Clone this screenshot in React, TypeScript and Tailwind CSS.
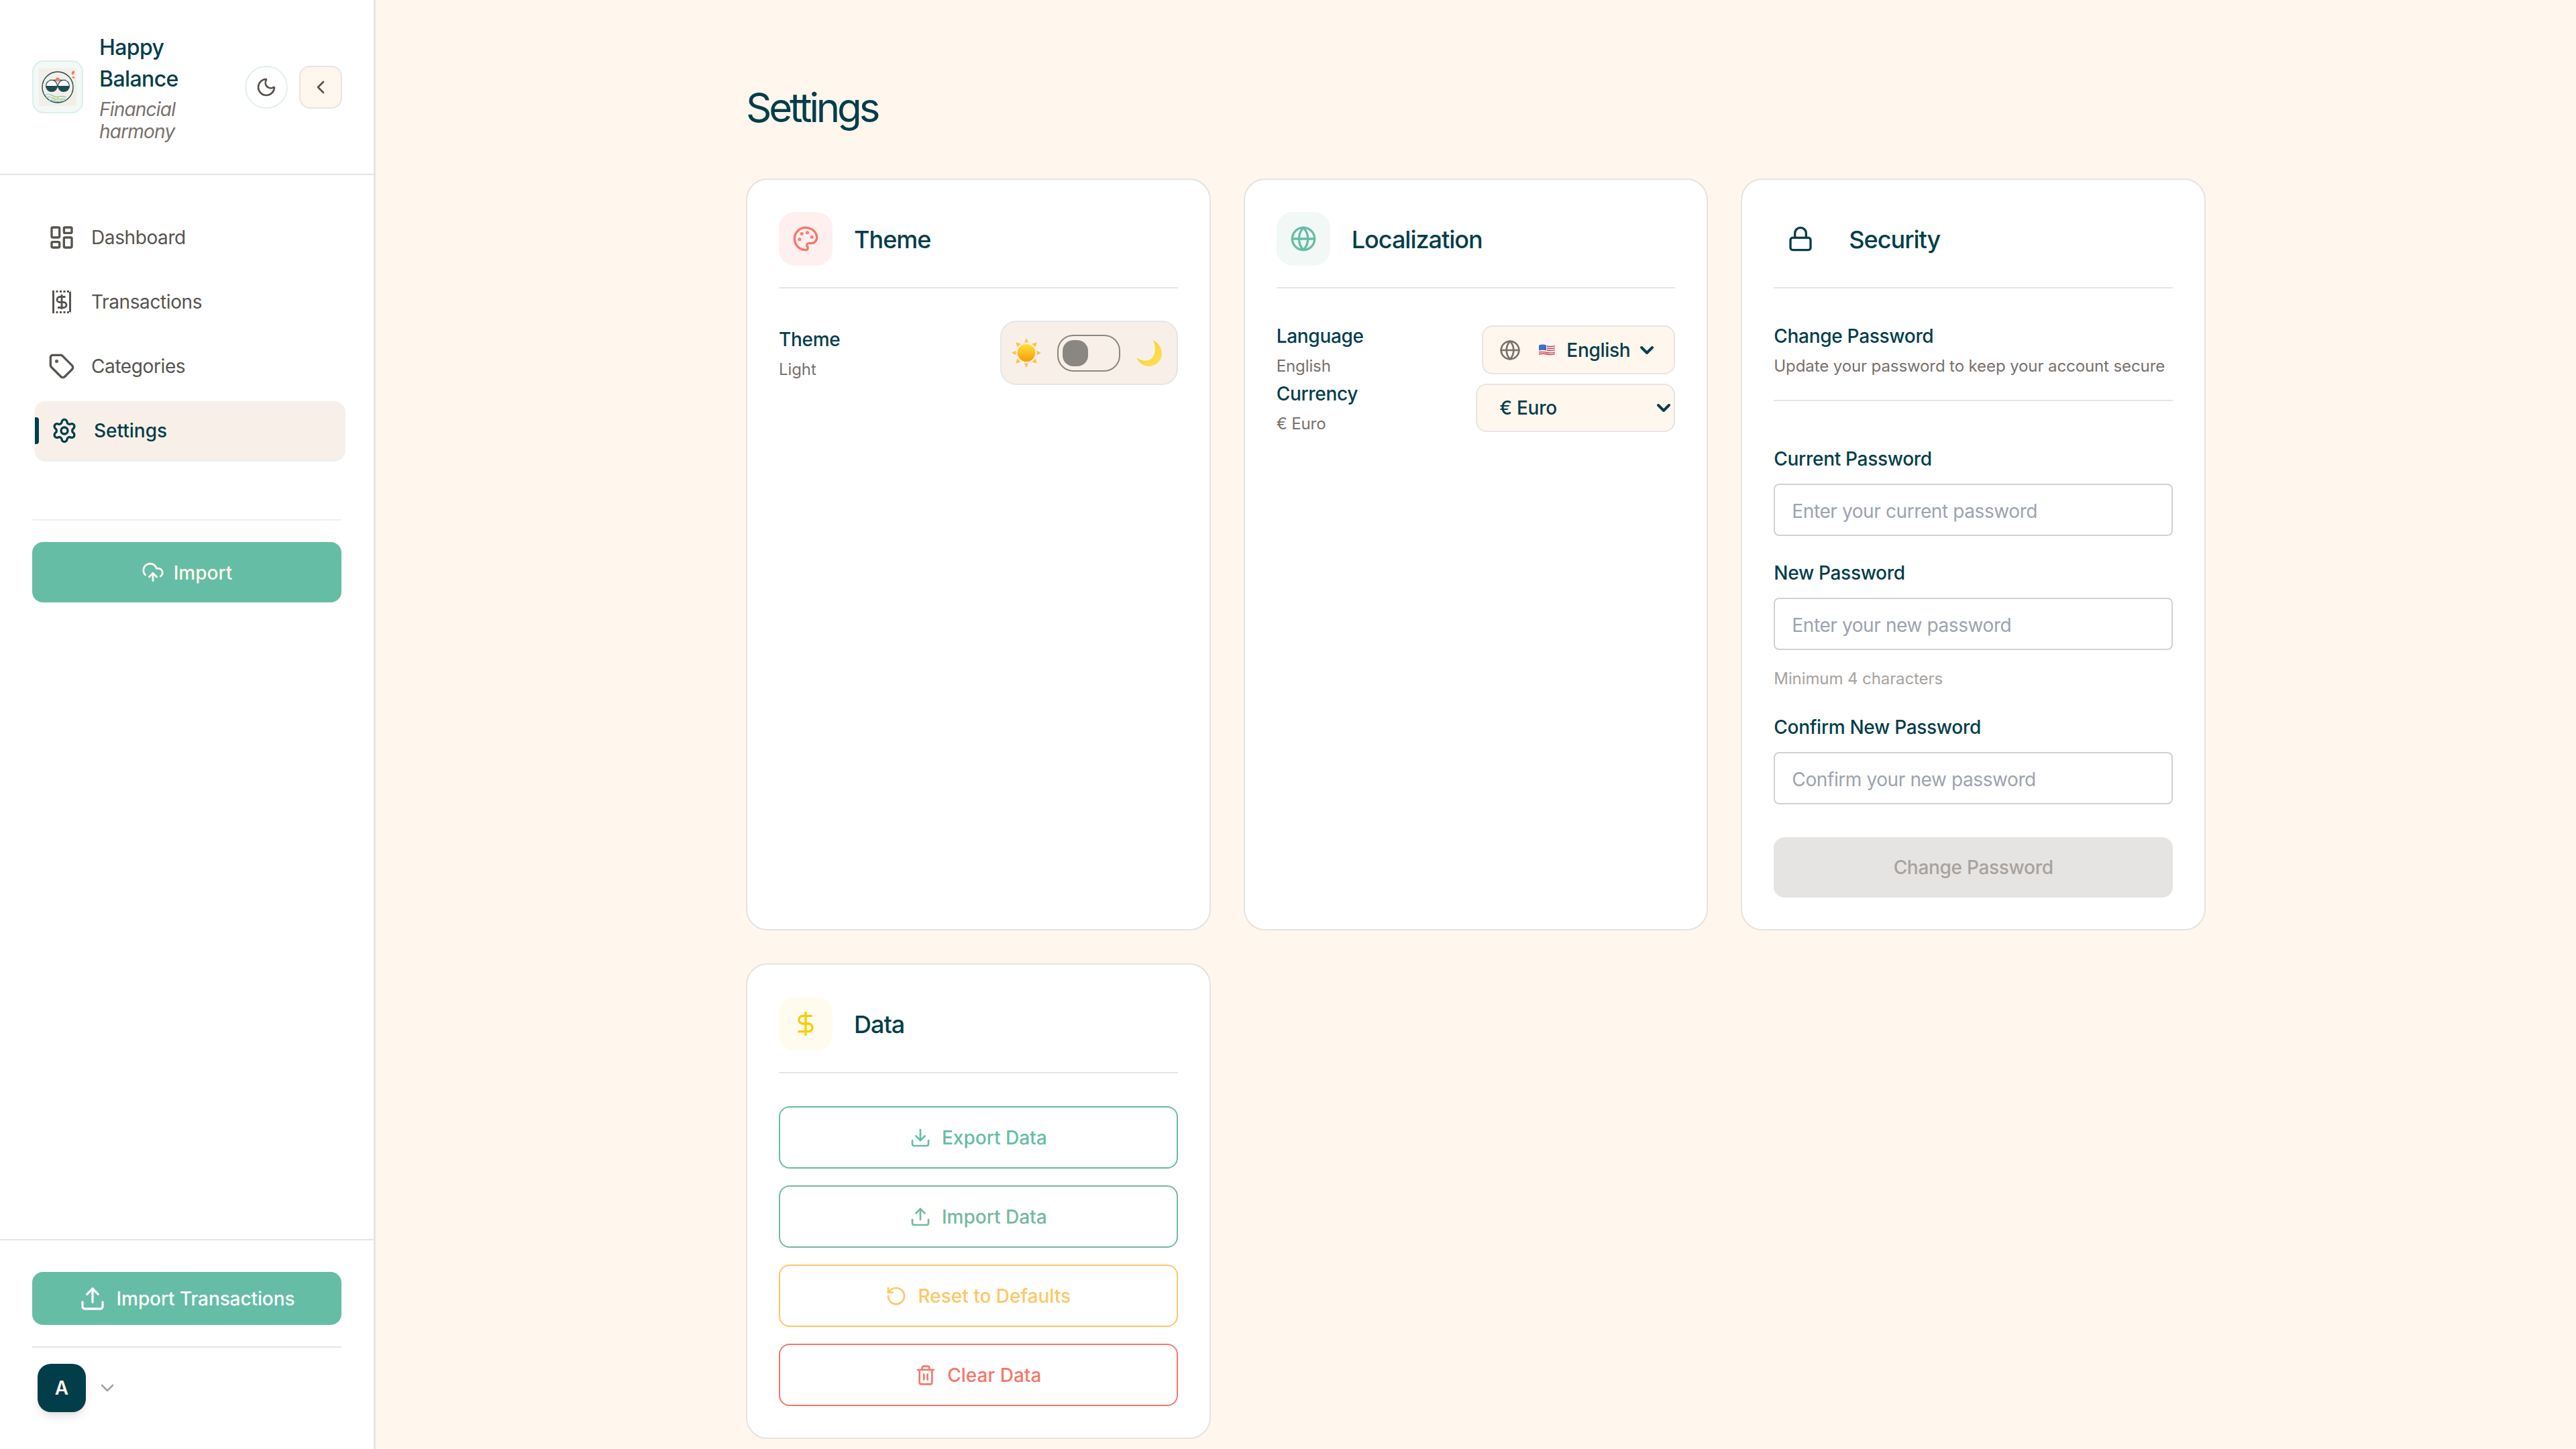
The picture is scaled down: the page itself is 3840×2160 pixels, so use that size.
import React from "react";
import {
  ChevronDown,
  ChevronLeft,
  CloudUpload,
  DollarSign,
  Download,
  Globe,
  LayoutDashboard,
  Lock,
  Moon,
  Palette,
  RotateCcw,
  Settings,
  Tag,
  Trash2,
  Upload,
} from "lucide-react";

const Logo = () => (
  <svg viewBox="48 90 76 79" className="w-[76px] h-[79px] shrink-0">
    <rect x="49" y="91" width="74" height="77" rx="16" fill="#f3f9f6" stroke="#dceee8" strokeWidth="2" />
    <rect x="58" y="102" width="56" height="56" fill="#f2efe9" />
    <circle cx="86" cy="130" r="23" fill="none" stroke="#1f4a52" strokeWidth="1.4" />
    <path d="M74 119.5h24" stroke="#1f4a52" strokeWidth="1.4" />
    <circle cx="86" cy="118.500" r="3" fill="#ef7d6c" />
    <circle cx="77" cy="128" r="8.500" fill="#fff" stroke="#1f4a52" strokeWidth="1.2" />
    <circle cx="95" cy="128" r="8.500" fill="#fff" stroke="#1f4a52" strokeWidth="1.2" />
    <path d="M68.500 128h17a8.500 8.500 0 0 1-17 0zM86.500 128h17a8.500 8.500 0 0 1-17 0z" fill="#1f4a52" />
    <path
      d="M67 142q5-3 10 0t10 2t12 1M68 146q5-3 10 0t10 2t11 1M72 150q5-2 9 0t9 1t6 0"
      fill="none"
      stroke="#7cc4ac"
      strokeWidth="1.2"
    />
    <circle cx="81" cy="144" r="1.200" fill="#f7c23f" />
    <circle cx="86" cy="146" r="1.200" fill="#f7c23f" />
    <circle cx="91" cy="148" r="1.200" fill="#f7c23f" />
    <ellipse cx="109" cy="108.500" rx="2" ry="3" transform="rotate(25 109 108.500)" fill="#ef7d6c" />
    <ellipse cx="109.500" cy="115.500" rx="2" ry="1.400" transform="rotate(25 109.500 115.500)" fill="#ef7d6c" />
  </svg>
);

const ReceiptIcon = () => (
  <svg viewBox="0 0 40 40" className="w-10 h-10 shrink-0" fill="none" stroke="currentColor" strokeWidth="3">
    <path d="M7.500 5v30M32.500 5v30" />
    <path d="M6 4.500h28M6 35.500h28" strokeDasharray="3 2.500" />
    <path d="M20 9v22M25.500 12.500H17a4 4 0 0 0 0 8h6a4 4 0 0 1 0 8h-9" strokeWidth="2.800" />
  </svg>
);

const SunEmoji = () => (
  <svg viewBox="0 0 42 42" className="w-[44px] h-[44px] shrink-0">
    <defs>
      <linearGradient id="sunFill" x1="0" y1="0" x2="0" y2="1">
        <stop offset="0" stopColor="#ffe135" />
        <stop offset="1" stopColor="#f59a0c" />
      </linearGradient>
    </defs>
    <g fill="#fbc04b">
      <path d="M21 0l3 6h-6zM21 42l-3-6h6zM0 21l6-3v6zM42 21l-6 3v-6z" />
      <path d="M6 6l7 2-5 5zM36 6l-2 7-5-5zM6 36l2-7 5 5zM36 36l-7-2 5-5z" />
    </g>
    <circle cx="21" cy="21" r="13" fill="url(#sunFill)" stroke="#fde9b8" strokeWidth="1" />
  </svg>
);

const MoonEmoji = () => (
  <svg viewBox="0 0 38 39" className="w-[38px] h-[39px] shrink-0">
    <defs>
      <linearGradient id="moonFill" x1="0" y1="0" x2="1" y2="1">
        <stop offset="0" stopColor="#f6c92e" />
        <stop offset="1" stopColor="#fde35c" />
      </linearGradient>
    </defs>
    <path
      d="M25 0C33 4 38 12 38 20C38 31 29 39 18 39C10 39 4 34 0 26C6 30 12 32 18 30C27 27 31 14 25 0Z"
      fill="url(#moonFill)"
    />
  </svg>
);

const FlagEmoji = () => (
  <svg viewBox="0 0 24 17" className="w-6 h-[17px] shrink-0">
    <path d="M0 1.500q6-2 12 0t12-1v15q-6 2-12 0t-12 1z" fill="#f4f4f4" />
    <g fill="none" stroke="#d3394a" strokeWidth="1.300">
      <path d="M12 3q6 1.500 12-.500M12 6q6 1.500 12-.500M12 9q6 1.500 12-.500M0 12q6-1 12 .500t12-.500M0 15q6-1.500 12 0t12-.500" />
    </g>
    <path d="M0 1.500q6-2 11 0v8q-5-1.500-11 0z" fill="#3f71c0" />
  </svg>
);

const navItems = [
  { label: "Dashboard", icon: <LayoutDashboard size={40} /> },
  { label: "Transactions", icon: <ReceiptIcon /> },
  { label: "Categories", icon: <Tag size={40} /> },
];

const Sidebar = () => (
  <aside className="w-[560px] h-screen shrink-0 bg-white border-r-[3px] border-[#e7e5e4] flex flex-col">
    <div className="h-[261px] border-b-2 border-[#e7e5e4] flex items-center pl-[48px] pr-[47px]">
      <Logo />
      <div className="ml-[24px] w-[180px]">
        <h1 className="text-[32px] leading-[47px] font-medium tracking-[-0.6px] text-[#023e4a]">Happy Balance</h1>
        <p className="text-[28px] leading-[33px] italic tracking-[-0.8px] text-[#78716c] mt-[6px]">Financial harmony</p>
      </div>
      <div className="ml-auto flex items-center gap-[17px]">
        <button className="w-[64px] h-[64px] rounded-full border-2 border-[#e3f0ec] bg-white flex items-center justify-center text-[#57534e]">
          <Moon size={32} />
        </button>
        <button className="w-[64px] h-[64px] rounded-[16px] border-2 border-[#e7e5e4] bg-[#fff6ee] flex items-center justify-center text-[#57534e]">
          <ChevronLeft size={32} />
        </button>
      </div>
    </div>

    <nav className="pt-[49px] flex flex-col gap-2 px-[48px]">
      {navItems.map((item) => (
        <a
          key={item.label}
          className="h-[88px] flex items-center gap-6 pl-[24px] text-[28px] tracking-[-0.4px] text-[#57534e]"
        >
          {item.icon}
          <span>{item.label}</span>
        </a>
      ))}
      <a className="relative h-[88px] w-[462px] translate-x-1 flex items-center gap-6 pl-[24px] rounded-[16px] bg-[#f8f0e8] shadow-sm text-[28px] font-medium text-[#023e4a]">
        <span className="absolute left-0 top-[24px] h-[40px] w-[6px] rounded-r-[4px] bg-[#023e4a]" />
        <Settings size={40} />
        <span>Settings</span>
      </a>
    </nav>

    <div className="mx-[48px] mt-[88px] pt-[32px] border-t-2 border-[#eef1f0]">
      <button className="w-full h-[90px] rounded-[16px] bg-[#66bda5] text-[#fff6ee] text-[28px] font-medium flex items-center justify-center gap-[14px]">
        <CloudUpload size={34} />
        <span className="mt-[2px]">Import</span>
      </button>
    </div>

    <div className="mt-auto border-t-2 border-[#e7e5e4] pt-[47px] px-[48px] pb-[55px]">
      <button className="w-full h-[79px] rounded-[16px] bg-[#66bda5] text-white text-[28px] tracking-[-0.1px] font-medium flex items-center justify-center gap-[16px]">
        <Upload size={40} />
        Import Transactions
      </button>
      <div className="mt-[32px] pt-[24px] border-t-2 border-[#e7e5e4] flex items-center pl-[8px] gap-[16px]">
        <div className="w-[72px] h-[72px] rounded-[20px] bg-[#023e4a] text-[#fff6ee] text-[28px] font-semibold flex items-center justify-center shadow-lg">
          A
        </div>
        <ChevronDown size={32} className="text-[#a8a29e]" />
      </div>
    </div>
  </aside>
);

type CardProps = {
  title: string;
  icon: React.ReactNode;
  iconBg: string;
  children: React.ReactNode;
};

const Card = ({ title, icon, iconBg, children }: CardProps) => (
  <section className="bg-white border-2 border-[#e5e3e1] rounded-[32px] px-[47px] pt-[48px] pb-[47px]">
    <div className="flex items-center gap-[32px] pb-[32px] border-b-2 border-[#e7e5e4]">
      <div className={`w-[80px] h-[80px] rounded-[24px] flex items-center justify-center ${iconBg}`}>{icon}</div>
      <h2 className="pt-[2px] text-[36px] leading-[56px] font-medium tracking-[-1px] text-[#023e4a]">{title}</h2>
    </div>
    {children}
  </section>
);

const Label = ({ children }: { children: React.ReactNode }) => (
  <div className="text-[28px] leading-[40px] font-medium tracking-[-0.3px] text-[#023e4a]">{children}</div>
);

const Sub = ({ children }: { children: React.ReactNode }) => (
  <div className="text-[24px] leading-[32px] tracking-[-0.1px] text-[#78716c] mt-[9px]">{children}</div>
);

const PasswordInput = ({ placeholder }: { placeholder: string }) => (
  <input
    type="password"
    placeholder={placeholder}
    className="mt-[17px] w-full h-[78px] px-[25px] pt-[3px] rounded-[8px] border-2 border-[#d1d1d1] bg-white text-[28px] tracking-[-0.4px] placeholder:text-[#9ca3af]"
  />
);

const dataActions = [
  {
    label: "Export Data",
    icon: <Download size={32} />,
    tone: "border-[#66bda5] text-[#66bda5]",
  },
  {
    label: "Import Data",
    icon: <Upload size={32} />,
    tone: "border-[#74b9a0] text-[#74b9a0]",
  },
  {
    label: "Reset to Defaults",
    icon: <RotateCcw size={32} />,
    tone: "border-[#fdc765] text-[#fdc765]",
  },
  {
    label: "Clear Data",
    icon: <Trash2 size={32} />,
    tone: "border-[#f6776a] text-[#f6776a]",
  },
];

export default function App() {
  return (
    <div className="flex h-screen overflow-hidden bg-[#fff6ee] font-[Inter,sans-serif]">
      <Sidebar />
      <main className="flex-1 h-screen overflow-hidden">
        <div className="mx-auto w-[2176px] pt-[124px]">
          <h1 className="text-[60px] leading-[72px] font-normal tracking-[-4.2px] text-[#023e4a] mb-[70px]">Settings</h1>
          <div className="grid grid-cols-3 gap-[49px] items-stretch">
            <Card title="Theme" icon={<Palette size={40} className="text-[#f6776a]" />} iconBg="bg-[#fff0ef]">
              <div className="mt-[48px] flex items-center justify-between">
                <div>
                  <Label>Theme</Label>
                  <Sub>Light</Sub>
                </div>
                <div className="w-[265px] h-[96px] rounded-[24px] border-2 border-[#e7e5e4] bg-[#f8f0e8] flex items-center justify-between pl-[15px] pr-[22px]">
                  <SunEmoji />
                  <div className="w-[94px] h-[55px] rounded-[24px] border-2 border-[#8a8580] flex items-center pl-[6px]">
                    <div className="w-[38px] h-[39px] rounded-[16px] bg-[#8a8782]" />
                  </div>
                  <MoonEmoji />
                </div>
              </div>
            </Card>

            <Card title="Localization" icon={<Globe size={40} className="text-[#66bda5]" />} iconBg="bg-[#f2f8f5]">
              <div className="mt-[51px] flex flex-col gap-[5px]">
                <div className="flex items-center justify-between">
                  <div>
                    <Label>Language</Label>
                    <Sub>English</Sub>
                  </div>
                  <button className="w-[288px] h-[73px] rounded-[16px] border-2 border-[#e7e5e4] bg-[#fff6ee] flex items-center pl-[24px] text-[28px] font-medium tracking-[-0.3px] text-[#023e4a]">
                    <Globe size={32} className="text-[#78716c]" />
                    <span className="ml-[27px]">
                      <FlagEmoji />
                    </span>
                    <span className="ml-[17px]">English</span>
                    <ChevronDown size={32} strokeWidth={3} className="ml-[9px]" />
                  </button>
                </div>
                <div className="flex items-center justify-between">
                  <div>
                    <Label>Currency</Label>
                    <Sub>€ Euro</Sub>
                  </div>
                  <div className="relative">
                    <select className="appearance-none w-[297px] h-[72px] rounded-[16px] border-2 border-[#e7e5e4] bg-[#fff6ee] pl-[33px] text-[28px] font-medium tracking-[-0.3px] text-[#023e4a]">
                      <option>€ Euro</option>
                    </select>
                    <ChevronDown
                      size={32}
                      strokeWidth={3}
                      className="absolute right-[1px] top-[20px] text-[#023e4a] pointer-events-none"
                    />
                  </div>
                </div>
              </div>
            </Card>

            <Card title="Security" icon={<Lock size={40} className="text-[#023e4a]" />} iconBg="bg-white">
              <div className="mt-[51px] pb-[34px] border-b-2 border-[#e7e5e4]">
                <Label>Change Password</Label>
                <Sub>Update your password to keep your account secure</Sub>
              </div>
              <div className="mt-[66px]">
                <Label>Current Password</Label>
                <PasswordInput placeholder="Enter your current password" />
              </div>
              <div className="mt-[35px]">
                <Label>New Password</Label>
                <PasswordInput placeholder="Enter your new password" />
                <div className="mt-[27px] text-[24px] leading-[32px] tracking-[-0.1px] text-[#a8a29e]">
                  Minimum 4 characters
                </div>
              </div>
              <div className="mt-[36px]">
                <Label>Confirm New Password</Label>
                <PasswordInput placeholder="Confirm your new password" />
              </div>
              <button className="mt-[49px] w-full h-[90px] rounded-[16px] bg-[#e5e4e2] text-[#a8a29e] text-[28px] tracking-[-0.3px] font-medium">
                Change Password
              </button>
            </Card>

            <Card title="Data" icon={<DollarSign size={40} className="text-[#fbcc00]" />} iconBg="bg-[#fffbee]">
              <div className="mt-[49px] flex flex-col gap-[25px]">
                {dataActions.map((action) => (
                  <button
                    key={action.label}
                    className={`h-[93px] rounded-[16px] border-2 bg-white flex items-center justify-center gap-[16px] text-[28px] font-medium ${action.tone}`}
                  >
                    {action.icon}
                    {action.label}
                  </button>
                ))}
              </div>
            </Card>
          </div>
        </div>
      </main>
    </div>
  );
}
